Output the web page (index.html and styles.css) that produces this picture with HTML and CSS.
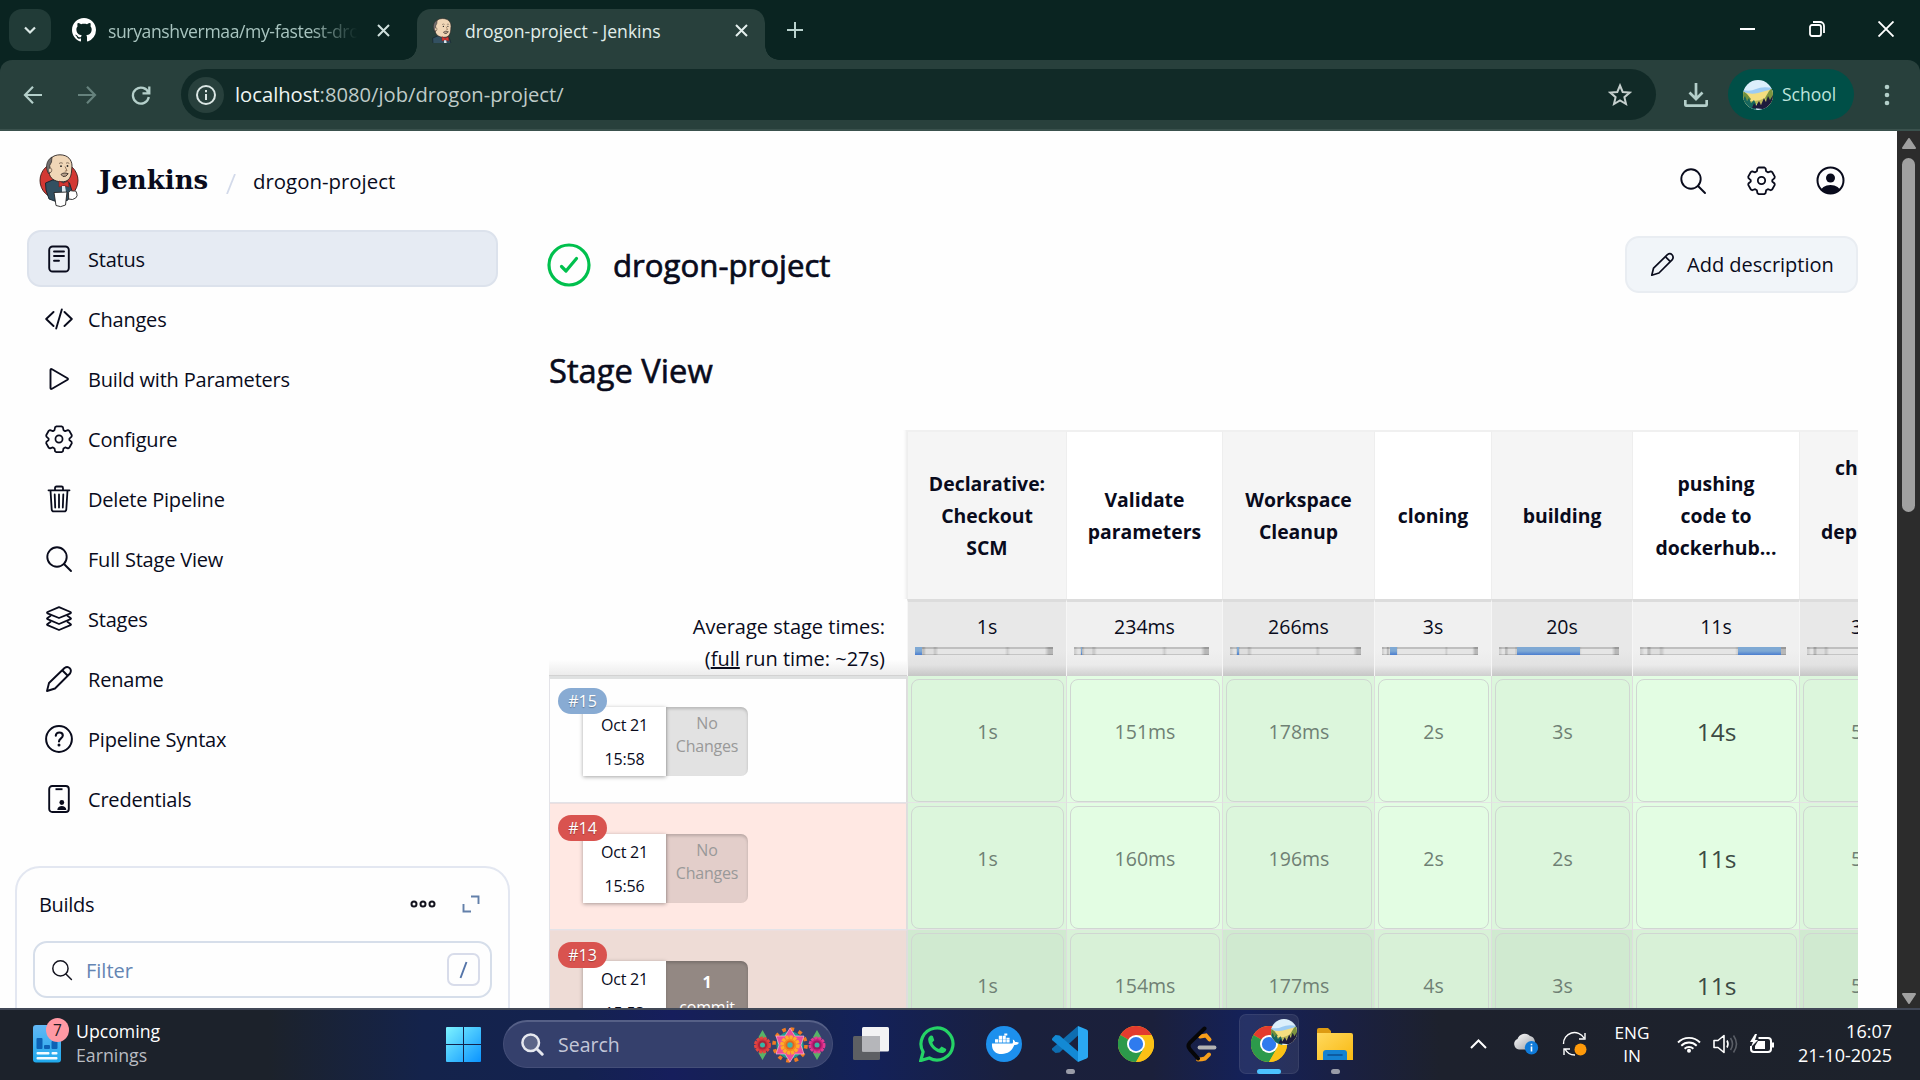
FILE: index.html
```html
<!DOCTYPE html>
<html lang="en">
<head>
<meta charset="utf-8">
<title>drogon-project - Jenkins</title>
<link rel="stylesheet" href="styles.css">
</head>
<body>
<svg class="defs" width="0" height="0" aria-hidden="true">
  <defs>
    <linearGradient id="winGrad" x1="0" y1="0" x2="1" y2="1"><stop offset="0" stop-color="#7df3ff"/><stop offset="1" stop-color="#0a93ff"/></linearGradient>
    <linearGradient id="folderGrad" x1="0" y1="0" x2="1" y2="1"><stop offset="0" stop-color="#ffd95e"/><stop offset="1" stop-color="#f9b911"/></linearGradient>
    <linearGradient id="widgetGrad" x1="0" y1="0" x2="0" y2="1"><stop offset="0" stop-color="#62b8f5"/><stop offset="1" stop-color="#1fa9ec"/></linearGradient>
    <linearGradient id="cloudGrad" x1="0" y1="0" x2="1" y2="1"><stop offset="0" stop-color="#ffffff"/><stop offset="1" stop-color="#9a9da3"/></linearGradient>
  </defs>
  <symbol id="search" viewBox="0 0 28 28"><g fill="none" stroke="currentColor" stroke-width="1.9" stroke-linecap="round"><circle cx="12" cy="12" r="9.7"/><path d="M19 19l7 7"/></g></symbol>
  <symbol id="gear" viewBox="0 0 512 512"><g fill="none" stroke="currentColor" stroke-width="32" stroke-linecap="round" stroke-linejoin="round"><circle cx="256" cy="256" r="65"/><path d="M206 26h100l22 16 10 52 30 18 52-18 24 12 46 82-4 26-40 36v24l40 34 4 26-46 82-24 12-52-18-30 18-10 52-22 16H206l-22-16-10-52-30-18-52 18-24-12-46-82 4-26 40-34v-24l-40-36-4-26 46-82 24-12 52 18 30-18 10-52z"/></g></symbol>
  <symbol id="pencil" viewBox="0 0 28 28"><g fill="none" stroke="currentColor" stroke-width="1.9" stroke-linejoin="round"><path d="M2 26l2-8L19.500 3c4-3 8 1.500 5.500 5.500L10 23.500z"/><path d="M17.500 5.500l5 5"/></g></symbol>
  <g id="butler-man">
    <path d="M6.500 29l7-3 12 0 5 3 2.500 8-4 9-8 3-11-4-3-9z" fill="#335061" stroke="#15202a" stroke-width=".9"/>
    <path d="M9 14C8.500 5 14 .8 21 .8c8 0 12 5.200 12 11.200l-.4 5c-.5 6-2.600 10.200-8.100 10.700-7 .6-12.500-2.200-14-7.200z" fill="#f0d6b7" stroke="#2a2422" stroke-width=".9"/>
    <path d="M9.500 19.500C5.800 13.500 7.500 6 13 3l-.5 5-1.800 3.500.8 7z" fill="#73706f" stroke="#2a2422" stroke-width=".7"/>
    <path d="M10 14.500c2-1.200 3 .5 2.700 2.200-.3 2-2 2.300-2.700 1" fill="#f0d6b7" stroke="#4a3a30" stroke-width=".7"/>
    <path d="M20 9.500q2-1.500 3.800-.2M27 9.200q1.800-1 3.300.2" fill="none" stroke="#6d5a4b" stroke-width=".8"/>
    <circle cx="22" cy="12.200" r=".9" fill="#222"/><circle cx="28.500" cy="12" r=".9" fill="#222"/>
    <path d="M26 12.500l2 4.200-2.200.5" fill="none" stroke="#7a5b43" stroke-width=".8"/>
    <path d="M22 20.500q2.500-2.500 7.200-.8-2 3.500-5.200 2.800z" fill="#b7a08b" stroke="#3a2e28" stroke-width=".9"/>
    <path d="M20 27l4.500 2.300 4.500-2.300 1 6-5.500-1.500-4.500 1.500z" fill="#d33833" stroke="#811d1a" stroke-width=".6"/>
    <path d="M23 32l3 0 1 6-4 0z" fill="#dfe8ee"/>
  </g>
  <symbol id="butler" viewBox="0 0 40 54">
    <ellipse cx="20" cy="26.500" rx="19" ry="18.500" fill="#d33833" stroke="#3b1512" stroke-width=".9"/>
    <use href="#butler-man"/>
    <path d="M29.500 38.500q2-3 4.500-1.500 3.500-1 3.700 2 1.300 3-1 5-3 2.500-7 1z" fill="#fff" stroke="#222" stroke-width=".9"/>
    <path d="M15 38.500l13-.5-1.500 13q-5 3-9.500.5z" fill="#fff" stroke="#222" stroke-width=".9"/>
  </symbol>
  <symbol id="butler-bust" viewBox="5 0 30 36"><use href="#butler-man"/></symbol>
  <symbol id="chrome" viewBox="0 0 48 48">
    <circle cx="24" cy="24" r="24" fill="#fbc116"/>
    <path d="M24 24L3.200 12A24 24 0 0 1 44.800 12z" fill="#e33b2e"/>
    <path d="M24 24L3.200 12A24 24 0 0 0 24 48L34.400 30z" fill="#2c9a4b"/>
    <path d="M24 12h20.800A24 24 0 0 1 24 48l10.400-18z" fill="#fbc116"/>
    <circle cx="24" cy="24" r="12" fill="#fff"/><circle cx="24" cy="24" r="9.500" fill="#2f7bee"/>
  </symbol>
  <symbol id="landscape" viewBox="0 0 30 30">
    <clipPath id="disc"><circle cx="15" cy="15" r="15"/></clipPath>
    <g clip-path="url(#disc)"><rect width="30" height="30" fill="#dceffb"/><path d="M0 10q7 2 13-1t17-1v10H0z" fill="#9ccbf3"/><path d="M0 12q8 3 15 1t15-4v18H0z" fill="#f4dd80"/><path d="M0 11l4 3 4 5-2 3H0z" fill="#6f8f3c"/><path d="M30 7l-4 4-4 7 2 5h6z" fill="#7d9440"/><path d="M3 20q10 3 19-2l-3 6H6z" fill="#b9b75a"/><path d="M0 19l2-3 2 5 2-3 2 5 3-3 2 4v6H0z" fill="#17665d"/><path d="M9 28l2-5 2 3 3-5 2 4 3-7 2 4 2-6 2 4 3-5v15z" fill="#1c1b3c"/></g>
  </symbol>
</svg>

<header class="tabstrip">
  <div class="tab-menu"><svg width="14" height="14" viewBox="0 0 14 14"><path d="M2 4.500l5 5 5-5" fill="none" stroke="#dbe9e6" stroke-width="2.200"/></svg></div>
  <div class="tab tab-idle">
    <svg class="favicon" width="24" height="24" viewBox="0 0 16 16"><path fill="#fff" d="M8 0C3.580 0 0 3.580 0 8c0 3.540 2.290 6.530 5.470 7.590.4.070.55-.17.55-.38 0-.19-.01-.82-.01-1.490-2.010.37-2.530-.49-2.690-.94-.09-.23-.48-.94-.82-1.130-.28-.15-.68-.52-.01-.53.63-.01 1.080.58 1.230.82.72 1.210 1.870.87 2.330.66.07-.52.28-.87.51-1.070-1.780-.2-3.640-.89-3.640-3.950 0-.87.31-1.590.82-2.150-.08-.2-.36-1.020.08-2.120 0 0 .67-.21 2.200.82.64-.18 1.320-.27 2-.27s1.360.09 2 .27c1.530-1.040 2.200-.82 2.200-.82.44 1.100.16 1.920.08 2.120.51.56.82 1.270.82 2.150 0 3.070-1.870 3.750-3.650 3.950.29.25.54.73.54 1.480 0 1.070-.01 1.930-.01 2.200 0 .21.15.46.55.38A8.010 8.010 0 0 0 16 8c0-4.420-3.580-8-8-8z"/></svg>
    <span class="tab-title tab-title-fade">suryanshvermaa/my-fastest-drogon</span>
    <svg class="tab-close" width="13" height="13" viewBox="0 0 13 13"><path d="M1 1l11 11M12 1L1 12" stroke="#cfe0dd" stroke-width="2"/></svg>
  </div>
  <div class="tab tab-active">
    <svg class="favicon" width="22" height="25"><use href="#butler-bust"/></svg>
    <span class="tab-title">drogon-project - Jenkins</span>
    <svg class="tab-close" width="13" height="13" viewBox="0 0 13 13"><path d="M1 1l11 11M12 1L1 12" stroke="#e4efed" stroke-width="2"/></svg>
  </div>
  <svg class="new-tab" width="16" height="16" viewBox="0 0 16 16"><path d="M8 0v16M0 8h16" stroke="#b9d2cd" stroke-width="2"/></svg>
  <div class="window-controls">
    <svg width="16" height="16" viewBox="0 0 16 16"><path d="M0 8h15" stroke="#fff" stroke-width="2"/></svg>
    <svg width="16" height="16" viewBox="0 0 16 16"><g fill="none" stroke="#fff" stroke-width="1.800"><rect x="1" y="4" width="11" height="11" rx="2"/><path d="M4 1h7a4 4 0 0 1 4 4v7"/></g></svg>
    <svg width="16" height="16" viewBox="0 0 16 16"><path d="M.5.500l15 15M15.500.500l-15 15" stroke="#fff" stroke-width="1.900"/></svg>
  </div>
</header>

<div class="toolbar-wrap">
<nav class="toolbar">
  <div class="nav-buttons">
    <svg width="20" height="20" viewBox="0 0 20 20"><path d="M19 10H2.500M10 1.800L2 10l8 8.200" fill="none" stroke="#b4cfca" stroke-width="2.200"/></svg>
    <svg width="20" height="20" viewBox="0 0 20 20"><path d="M1 10h16.500M10 1.800L18 10l-8 8.200" fill="none" stroke="#66827d" stroke-width="2.200"/></svg>
    <svg width="20" height="20" viewBox="0 0 20 20"><path d="M17.500 8A8 8 0 1 0 17.800 12M18.300 1.500v6.800h-6.800" fill="none" stroke="#b4cfca" stroke-width="2.300"/></svg>
  </div>
  <div class="omnibox">
    <span class="site-info"><svg width="22" height="22" viewBox="0 0 22 22"><g fill="none" stroke="#dbe6e4" stroke-width="2"><circle cx="11" cy="11" r="9"/><path d="M11 10v6M11 6v2.200"/></g></svg></span>
    <span class="url"><b>localhost</b>:8080/job/drogon-project/</span>
    <svg class="star" width="24" height="24" viewBox="0 0 24 24"><path d="M12 2.500l2.700 6.500 7 .6-5.300 4.600 1.600 6.800-6-3.600-6 3.600 1.600-6.800L2.300 9.600l7-.6z" fill="none" stroke="#c5cfcd" stroke-width="2"/></svg>
  </div>
  <svg class="download" width="24" height="24" viewBox="0 0 24 24"><path d="M12 0v15M5.500 9.500l6.500 6.500 6.500-6.500M1.300 17v4.200q0 1.500 1.500 1.500h18.400q1.500 0 1.500-1.500V17" fill="none" stroke="#b4cfca" stroke-width="2.700"/></svg>
  <div class="profile"><svg width="30" height="30"><use href="#landscape"/></svg><span>School</span></div>
  <svg class="kebab" width="6" height="22" viewBox="0 0 6 22"><g fill="#b4cfca"><circle cx="3" cy="3" r="2.300"/><circle cx="3" cy="11" r="2.300"/><circle cx="3" cy="19" r="2.300"/></g></svg>
</nav>
</div>

<div class="viewport">
  <div class="page">
    <div class="page-header">
      <svg class="logo" width="40" height="54"><use href="#butler"/></svg>
      <span class="brand">Jenkins</span>
      <svg class="crumb-sep" width="10" height="20" viewBox="0 0 10 20"><path d="M9 0L1 20" stroke="#d3daea" stroke-width="1.800"/></svg>
      <span class="crumb">drogon-project</span>
      <div class="header-actions">
        <svg width="28" height="28"><use href="#search"/></svg>
        <svg width="29" height="29"><use href="#gear"/></svg>
        <svg width="29" height="29" viewBox="0 0 29 29"><clipPath id="userClip"><circle cx="14.500" cy="14.500" r="13"/></clipPath><circle cx="14.500" cy="14.500" r="13" fill="none" stroke="currentColor" stroke-width="2"/><circle cx="14.500" cy="12" r="4.500" fill="currentColor"/><ellipse cx="14.500" cy="26" rx="10" ry="7" fill="currentColor" clip-path="url(#userClip)"/></svg>
      </div>
    </div>
    <div class="columns">
      <aside class="sidebar">
        <ul class="tasks">
          <li class="task active"><svg width="28" height="28" viewBox="0 0 28 28"><g fill="none" stroke="currentColor" stroke-width="1.900" stroke-linecap="round"><rect x="4.200" y="1.500" width="19.600" height="25" rx="3.500"/><path d="M9 6.500h10M9 11h10M9 15.800h5"/></g></svg><span>Status</span></li>
          <li class="task"><svg width="28" height="28" viewBox="0 0 28 28"><path d="M8.500 7L1.200 14l7.300 7M19.500 7l7.300 7-7.300 7M16.800 4.500l-5.600 19" fill="none" stroke="currentColor" stroke-width="1.900" stroke-linecap="round" stroke-linejoin="round"/></svg><span>Changes</span></li>
          <li class="task"><svg width="28" height="28" viewBox="0 0 28 28"><path d="M5.500 5v18q0 1.500 1.500.700l15.500-9q1-.7 0-1.400L7 4.300q-1.500-.8-1.500.7z" fill="none" stroke="currentColor" stroke-width="1.900" stroke-linejoin="round"/></svg><span>Build with Parameters</span></li>
          <li class="task"><svg width="28" height="28"><use href="#gear"/></svg><span>Configure</span></li>
          <li class="task"><svg width="28" height="28" viewBox="0 0 28 28"><g fill="none" stroke="currentColor" stroke-width="1.800" stroke-linecap="round" stroke-linejoin="round"><path d="M3.500 5.300h21M5.500 5.500l1.200 18.800q.2 2 2 2h10.600q1.800 0 2-2L22.500 5.500M10 5V3q0-1.500 1.500-1.500h5Q18 1.500 18 3v2M9.700 9.500l.5 13M14 9.500v13M18.300 9.500l-.5 13"/></g></svg><span>Delete Pipeline</span></li>
          <li class="task"><svg width="28" height="28"><use href="#search"/></svg><span>Full Stage View</span></li>
          <li class="task"><svg width="28" height="28" viewBox="0 0 28 28"><g fill="none" stroke="currentColor" stroke-width="1.800" stroke-linejoin="round"><path d="M14 2.200L25.500 7q1 .7 0 1.300L14 13 2.500 8.300q-1-.6 0-1.300z"/><path d="M6 10.500L2.500 13q-1 .6 0 1.200L14 19l11.500-4.800q1-.6 0-1.200L22 10.500"/><path d="M6 16.500L2.500 19q-1 .6 0 1.200L14 25l11.500-4.800q1-.6 0-1.200L22 16.500"/></g></svg><span>Stages</span></li>
          <li class="task"><svg width="28" height="28"><use href="#pencil"/></svg><span>Rename</span></li>
          <li class="task"><svg width="28" height="28" viewBox="0 0 28 28"><circle cx="14" cy="14" r="12.900" fill="none" stroke="currentColor" stroke-width="2"/><path d="M10.800 10.800c0-4.500 7-4.300 7-.2 0 2.800-3.800 2.800-3.800 5.900" fill="none" stroke="currentColor" stroke-width="2.100" stroke-linecap="round"/><circle cx="14" cy="20" r="1.500" fill="currentColor"/></svg><span>Pipeline Syntax</span></li>
          <li class="task"><svg width="28" height="28" viewBox="0 0 28 28"><rect x="4.200" y="1" width="19.600" height="26" rx="3" fill="none" stroke="currentColor" stroke-width="1.900"/><path d="M10.500 4.200h7" stroke="currentColor" stroke-width="1.900"/><circle cx="16.800" cy="17.500" r="2.400" fill="currentColor"/><path d="M12.300 25c0-5.500 9-5.500 9 0z" fill="currentColor"/></svg><span>Credentials</span></li>
        </ul>
        <section class="builds">
          <div class="builds-head">
            <h2>Builds</h2>
            <svg width="26" height="10" viewBox="0 0 26 10"><g fill="none" stroke="#14141f" stroke-width="2"><circle cx="4" cy="5" r="2.500"/><circle cx="13" cy="5" r="2.500"/><circle cx="22" cy="5" r="2.500"/></g></svg>
            <svg class="expand" width="18" height="18" viewBox="0 0 18 18"><path d="M9 1.500h7.500V9M1.500 9v7.500H9" fill="none" stroke="#6380aa" stroke-width="1.900"/></svg>
          </div>
          <div class="filter">
            <svg width="22" height="22"><use href="#search"/></svg>
            <span>Filter</span>
            <kbd><svg width="9" height="18" viewBox="0 0 9 18"><path d="M7.500 1l-6 16" stroke="#5474a8" stroke-width="1.900"/></svg></kbd>
          </div>
        </section>
      </aside>

      <main class="main">
        <div class="title-row">
          <svg width="44" height="44" viewBox="0 0 44 44"><g fill="none" stroke="#00c04d" stroke-width="3.200" stroke-linecap="round" stroke-linejoin="round"><circle cx="22" cy="22" r="20"/><path d="M14.500 23.500l4.500 4.500 10.500-12.500"/></g></svg>
          <h1>drogon-project</h1>
          <button class="describe"><svg width="25" height="25"><use href="#pencil"/></svg><span>Add description</span></button>
        </div>
        <h2 class="section-title">Stage View</h2>

        <div class="stages">
          <div class="row head">
            <div class="corner"></div>
            <div class="th">Declarative:<br>Checkout<br>SCM</div>
            <div class="th">Validate<br>parameters</div>
            <div class="th">Workspace<br>Cleanup</div>
            <div class="th">cloning</div>
            <div class="th">building</div>
            <div class="th">pushing<br>code to<br>dockerhub...</div>
            <div class="th cut"><span class="cut-a">ch</span><span class="cut-b">dep</span></div>
          </div>
          <div class="row averages">
            <div class="avg-label">Average stage times:<br>(<u>full</u> run time: ~27s)</div>
            <div class="avg"><span>1s</span><div class="bar"><i style="left:0;width:5.200%"></i></div></div>
            <div class="avg"><span>234ms</span><div class="bar"><i style="left:5.200%;width:.8%"></i></div></div>
            <div class="avg"><span>266ms</span><div class="bar"><i style="left:5.400%;width:1.500%"></i></div></div>
            <div class="avg"><span>3s</span><div class="bar"><i style="left:8.500%;width:7.300%"></i></div></div>
            <div class="avg"><span>20s</span><div class="bar"><i style="left:15.200%;width:52%"></i></div></div>
            <div class="avg"><span>11s</span><div class="bar"><i style="left:67.400%;width:29.200%"></i></div></div>
            <div class="avg cut"><span>3</span><div class="bar"></div></div>
          </div>

          <div class="row run">
            <div class="run-info">
              <span class="badge blue">#15</span>
              <div class="when"><span>Oct 21</span><span>15:58</span></div>
              <div class="changes">No<br>Changes</div>
            </div>
            <div class="cell"><div>1s</div></div><div class="cell"><div>151ms</div></div><div class="cell"><div>178ms</div></div><div class="cell"><div>2s</div></div><div class="cell"><div>3s</div></div><div class="cell"><div class="slow">14s</div></div><div class="cell cut"><div>5</div></div>
          </div>
          <div class="row run failed">
            <div class="run-info">
              <span class="badge">#14</span>
              <div class="when"><span>Oct 21</span><span>15:56</span></div>
              <div class="changes">No<br>Changes</div>
            </div>
            <div class="cell"><div>1s</div></div><div class="cell"><div>160ms</div></div><div class="cell"><div>196ms</div></div><div class="cell"><div>2s</div></div><div class="cell"><div>2s</div></div><div class="cell"><div class="slow">11s</div></div><div class="cell cut"><div>5</div></div>
          </div>
          <div class="row run failed hovered">
            <div class="run-info">
              <span class="badge">#13</span>
              <div class="when"><span>Oct 21</span><span>15:53</span></div>
              <div class="changes commits"><b>1</b><br>commit</div>
            </div>
            <div class="cell"><div>1s</div></div><div class="cell"><div>154ms</div></div><div class="cell"><div>177ms</div></div><div class="cell"><div>4s</div></div><div class="cell"><div>3s</div></div><div class="cell"><div class="slow">11s</div></div><div class="cell cut"><div>5</div></div>
          </div>
        </div>
      </main>
    </div>
  </div>
  <div class="scrollbar">
    <svg width="14" height="11" viewBox="0 0 14 11"><path d="M7 1L13 10H1z" fill="#a0a0a0" stroke="#a0a0a0" stroke-width="2" stroke-linejoin="round"/></svg>
    <div class="thumb"></div>
    <svg class="down" width="14" height="11" viewBox="0 0 14 11"><path d="M7 10L13 1H1z" fill="#a0a0a0" stroke="#a0a0a0" stroke-width="2" stroke-linejoin="round"/></svg>
  </div>
</div>

<footer class="taskbar">
  <div class="widget">
    <div class="widget-icon">
      <svg width="28" height="38" viewBox="0 0 28 38"><rect width="28" height="37.500" rx="3" fill="url(#widgetGrad)"/><g fill="#0d62b5"><rect x="3.500" y="13" width="6" height="11" rx="1"/><rect x="11" y="20" width="6" height="4" rx="1"/><rect x="18.500" y="16" width="6" height="8" rx="1"/></g><g fill="#f2fbff"><rect x="3.500" y="27" width="13" height="2.600" rx="1"/><rect x="18.500" y="27" width="6" height="2.600" rx="1"/><rect x="3.500" y="32" width="21" height="2.600" rx="1"/></g></svg>
      <span class="count">7</span>
    </div>
    <div class="widget-text"><span>Upcoming</span><span class="dim">Earnings</span></div>
  </div>
  <svg class="start" width="35" height="35" viewBox="0 0 35 35"><path d="M0 1q0-1 1-1h16v17H0zM18 0h16q1 0 1 1v16H18zM0 18h17v17H1q-1 0-1-1zM18 18h17v16q0 1-1 1H18z" fill="url(#winGrad)"/></svg>
  <div class="search-pill">
    <svg width="23" height="23" viewBox="0 0 23 23"><circle cx="9.700" cy="9.700" r="8.300" fill="#5c6588" stroke="#e6e8ef" stroke-width="2.500"/><path d="M15.700 15.700l5.500 5.500" stroke="#e6e8ef" stroke-width="3" stroke-linecap="round"/></svg>
    <span>Search</span>
    <svg class="flowers" width="72" height="36" viewBox="0 0 72 36">
      <g fill="#58b368"><path d="M8.500 3l4 7-4 7-4-7zM8.500 33l4-7-4-7-4 7zM63 3l4 7-4 7-4-7zM63 33l4-7-4-7-4 7z"/></g>
      <circle cx="8.500" cy="18" r="7.200" fill="#d2353f" stroke="#e2453f" stroke-width="2.600" stroke-dasharray="3 .9"/><circle cx="8.500" cy="18" r="4.500" fill="#a82436"/><circle cx="8.500" cy="18" r="2.500" fill="#37b5a5"/>
      <circle cx="63" cy="18" r="7.200" fill="#c91f7b" stroke="#e23a92" stroke-width="2.600" stroke-dasharray="3 .9"/><circle cx="63" cy="18" r="4.500" fill="#961a62"/><circle cx="63" cy="18" r="2.500" fill="#37b5a5"/>
      <circle cx="36" cy="18" r="16" fill="none" stroke="#f07a22" stroke-width="3.600" stroke-dasharray="3.700 4.680"/>
      <circle cx="36" cy="18" r="13.500" fill="#1d9c8e"/>
      <path d="M36 1l5 8 9-0-3 9 3 9-9 0-5 8-5-8-9 0 3-9-3-9 9 0z" fill="#ec4b9b" stroke="#ffd2e2" stroke-width=".6"/>
      <circle cx="36" cy="18" r="8" fill="#f58a1f" stroke="#ffab2c" stroke-width="3.600" stroke-dasharray="3.200 .9"/><circle cx="36" cy="18" r="4.500" fill="#e2641f"/><circle cx="36" cy="18" r="2.700" fill="#3cb7a8"/>
    </svg>
  </div>
  <div class="apps">
    <div class="app"><svg width="36" height="36" viewBox="0 0 36 36"><rect y="10" width="27" height="24" rx="1.500" fill="#5d5f63"/><rect x="9" y="1" width="27" height="24.500" rx="1.500" fill="#f3f3f4"/><path d="M9 10h18v15.500H9z" fill="#b5b6ba"/></svg></div>
    <div class="app"><svg width="36" height="36" viewBox="0 0 36 36"><path d="M1.800 34.500l2.300-8.600A16 16 0 1 1 10.300 32z" fill="none" stroke="#25d366" stroke-width="3.200"/><path d="M12.500 9.500c-1.500 0-3.500 2-3.300 4.500.5 6.500 8 13 13.800 13 2.500 0 4.500-1.700 4.200-4l-4.600-2.500-2.600 2.500c-3-1-5.700-3.500-6.700-6.500l2-2.300-1.500-4.200z" fill="#25d366"/></svg></div>
    <div class="app"><svg width="36" height="36" viewBox="0 0 36 36"><circle cx="18" cy="18" r="18" fill="#1d90ed"/><path d="M6 17.500h20.500c.8-1.300.5-3 .3-4 1.600.6 2.200 1.700 2.400 2.600 1.400-.3 2.600 0 3.800.7-1 1.800-2.700 2.400-4.700 2.300C26 25 21.500 28 16 28 9 28 5.500 24 6 17.500z" fill="#fff"/><g fill="#fff"><path d="M9 13.300h3.200v3.200H9zM12.800 13.300H16v3.200h-3.200zM16.600 13.300h3.200v3.200h-3.200zM20.400 13.300h3.200v3.200h-3.200zM12.800 9.800H16V13h-3.200zM16.600 9.800h3.200V13h-3.200zM20.400 11.800h3.200v1.200h-3.200zM18.300 7.500h3v2h-3z"/></g></svg></div>
    <div class="app"><svg width="36" height="36" viewBox="0 0 36 36"><path d="M26 0v9.500L7.500 26.500 3.500 27 0 24v-1.500z" fill="#0e6db0"/><path d="M0 12.500l3.500-3.500 4 .5L26 25.500V36L0 14z" fill="#1389d4"/><path d="M26 0l8.500 3.500q1.500.7 1.500 2v25q0 1.300-1.500 2L26 36z" fill="#2aa8f2"/></svg><i class="dot"></i></div>
    <div class="app"><svg width="36" height="36"><use href="#chrome"/></svg></div>
    <div class="app"><svg width="32" height="36" viewBox="0 0 32 36"><path d="M14 10.500l6-1 3.500 4M23 28.500l-4 4q-3 1-7 1" fill="none" stroke="#f89f1b" stroke-width="4" stroke-linecap="round"/><path d="M18.500 2.500L4 16.500q-3 3.500 0 7l8 9" fill="none" stroke="#060608" stroke-width="4" stroke-linecap="round"/><path d="M13.500 21.500h15" stroke="#b3b3b3" stroke-width="3.800" stroke-linecap="round"/></svg></div>
    <div class="app current"><svg width="36" height="36"><use href="#chrome"/></svg><svg class="app-badge" width="26" height="26" viewBox="0 0 30 30"><use href="#landscape"/></svg><i class="dot"></i></div>
    <div class="app"><svg width="36" height="36" viewBox="0 0 36 36"><path d="M0 4q0-2 2-2h9l3 3v6H0z" fill="#dd9b12"/><path d="M0 7h34q2 0 2 2v25H0z" fill="url(#folderGrad)"/><path d="M6 34v-7q0-3 3-3h18q3 0 3 3v7z" fill="#1482d2"/><path d="M11 29h14" stroke="#0b4f91" stroke-width="1.600" stroke-linecap="round"/></svg><i class="dot"></i></div>
  </div>
  <div class="tray">
    <svg class="chev" width="17" height="10" viewBox="0 0 17 10"><path d="M1 9l7.500-7.500L16 9" fill="none" stroke="#fff" stroke-width="2"/></svg>
    <svg class="cloud" width="25" height="22" viewBox="0 0 25 22"><path d="M5 16.500A5.500 5.500 0 0 1 3.500 6 7.500 7.500 0 0 1 16 3c4 1 5 4 5 7l-4 6.500z" fill="url(#cloudGrad)"/><circle cx="17.500" cy="14.800" r="6.700" fill="#0f7ad8"/><path d="M17.500 13.500v5M17.500 10.800v1.500" stroke="#fff" stroke-width="1.600"/></svg>
    <svg class="sync" width="25" height="26" viewBox="0 0 25 26"><path d="M1.500 13a11 11 0 0 1 20.500-6M23 2v6h-6M13 24a11 11 0 0 1-10-6M2 24v-6h6" fill="none" stroke="#fff" stroke-width="1.400"/><circle cx="18.500" cy="18.500" r="6" fill="#ff9a0a"/></svg>
    <div class="lang"><span>ENG</span><span>IN</span></div>
    <div class="status">
      <svg width="24" height="18" viewBox="0 0 24 18"><g fill="none" stroke="#fff" stroke-width="1.900"><path d="M1 7.500a15.500 15.500 0 0 1 22 0M4.300 10.700a11 11 0 0 1 15.400 0M7.600 13.700a6.500 6.500 0 0 1 8.800 0" /></g><circle cx="12" cy="15.800" r="2" fill="#fff"/></svg>
      <svg width="25" height="20" viewBox="0 0 25 20"><path d="M1 6.500h4l6-5v17l-6-5H1z" fill="none" stroke="#fff" stroke-width="1.600" stroke-linejoin="round"/><path d="M14 6.500q2 3.500 0 7" fill="none" stroke="#fff" stroke-width="1.600"/><path d="M17.500 4q4 6 0 12M20.500 1.500q6 8.500 0 17" fill="none" stroke="#5a5e66" stroke-width="1.600"/></svg>
      <svg width="24" height="20" viewBox="0 0 24 20"><path d="M8.500 4H18q3 0 3 3v8q0 3-3 3H4q-3 0-3-3v-3" fill="none" stroke="#fff" stroke-width="2"/><path d="M8 7h7v8H5v-3z" fill="#fff"/><path d="M22 8.500h2v5h-2z" fill="#fff"/><path d="M5 0L0 8h3l-2 5 7-7H5l2-6z" fill="#fff"/></svg>
    </div>
    <div class="clock"><span>16:07</span><span>21-10-2025</span></div>
  </div>
</footer>
</body>
</html>
```
FILE: styles.css
```css
* { box-sizing: border-box; }
body {
  margin: 0;
  width: 1920px;
  height: 1080px;
  overflow: hidden;
  display: flex;
  flex-direction: column;
  font-family: "Open Sans", "Noto Sans", sans-serif;
  font-size: 20px;
  color: #090b1c;
  background: #fff;
}
svg { display: block; flex: none; }
.defs { position: absolute; }
h1, h2 { margin: 0; font-weight: 400; }
ul { margin: 0; padding: 0; list-style: none; }

/* Tab strip */
.tabstrip {
  flex: none;
  height: 60px;
  background: #0a2421;
  display: flex;
  padding: 9px 26px 0 9px;
  font-size: 17.600px;
}
.tab-menu {
  width: 42px;
  height: 42px;
  border-radius: 13px;
  background: #213b37;
  display: grid;
  place-items: center;
}
.tab { display: flex; align-items: center; height: 51px; padding-bottom: 9px; }
.tab-idle { width: 366px; padding-left: 21px; color: #a8c4bf; }
.tab-idle .tab-title { width: 252px; margin-left: 12px; letter-spacing: -.4px; }
.tab-idle .tab-close { margin-left: 17px; }
.tab-title { white-space: nowrap; overflow: hidden; padding-top: 1px; }
.tab-title-fade { -webkit-mask-image: linear-gradient(90deg, #000 80%, transparent 99%); mask-image: linear-gradient(90deg, #000 80%, transparent 99%); }
.tab-active {
  position: relative;
  width: 348px;
  padding-left: 14px;
  padding-right: 17px;
  background: #28403c;
  border-radius: 14px 14px 0 0;
  color: #e1eeeb;
}
.tab-active::before, .tab-active::after {
  content: "";
  position: absolute;
  bottom: 0;
  width: 14px;
  height: 14px;
}
.tab-active::before { left: -14px; background: radial-gradient(circle at 0 0, transparent 13.500px, #28403c 14px); }
.tab-active::after { right: -14px; background: radial-gradient(circle at 100% 0, transparent 13.500px, #28403c 14px); }
.tab-active .tab-title { margin-left: 12px; }
.tab-active .tab-close { margin-left: auto; }
.new-tab { margin: 13px 0 0 22px; }
.window-controls { margin-left: auto; display: flex; gap: 53px; padding-top: 12px; }

/* Toolbar */
.toolbar-wrap { flex: none; background: #0a2421; }
.toolbar {
  height: 71px;
  background: #28403c;
  border-bottom: 2px solid #3a514d;
  border-radius: 12px 12px 0 0;
  display: flex;
  align-items: center;
  padding: 1px 30px 1px 23px;
}
.nav-buttons { display: flex; gap: 34px; width: 158px; }
.omnibox {
  width: 1475px;
  height: 51px;
  border-radius: 26px;
  background: #112a27;
  display: flex;
  align-items: center;
  padding: 0 24px 0 7px;
}
.site-info { width: 36px; height: 36px; border-radius: 50%; background: #28403c; display: grid; place-items: center; }
.url { margin: -2px 0 0 11px; font-size: 20.200px; color: #bfcbc8; }
.url b { font-weight: 400; color: #eef5f3; }
.star { margin-left: auto; }
.download { margin-left: 28px; }
.profile {
  width: 126px;
  height: 51px;
  margin-left: 20px;
  border-radius: 26px;
  background: #004f47;
  display: flex;
  align-items: center;
  gap: 9px;
  padding-left: 15px;
  font-size: 17.500px;
  color: #bfe5dd;
}
.profile span { margin-top: -2px; }
.kebab { margin-left: auto; }

/* Page */
.viewport { flex: none; height: 877px; display: flex; overflow: hidden; }
.page { width: 1897px; background: #fefefe; }
.scrollbar {
  width: 23px;
  background: #2c2c2c;
  display: flex;
  flex-direction: column;
  align-items: center;
  padding: 7px 0 4px;
}
.thumb { width: 13px; height: 354px; margin-top: 9px; border-radius: 7px; background: #a0a0a0; }
.down { margin-top: auto; }

.page-header { height: 99px; display: flex; align-items: center; padding: 0 52px 0 39px; }
.brand { font: bold 26px "DejaVu Serif", serif; margin: -2px 0 0 20px; width: 110px; }
.crumb-sep { margin: 6px 0 0 17px; }
.crumb { margin-left: 17px; font-size: 20.400px; }
.header-actions { margin-left: auto; display: flex; align-items: center; gap: 40px; }

.columns { display: flex; }
.sidebar { width: 511px; }
.tasks { display: flex; flex-direction: column; gap: 3px; padding-left: 27px; letter-spacing: -.2px; }
.task {
  width: 471px;
  height: 57px;
  border: 2px solid transparent;
  border-radius: 14px;
  display: flex;
  align-items: center;
  gap: 15px;
  padding-left: 16px;
  white-space: nowrap;
}
.task span { padding-top: 2px; }
.task.active { background: #e6ebf3; border-color: #dce2ec; }

.builds {
  margin: 39px 0 0 15px;
  width: 495px;
  height: 260px;
  border: 2px solid #e3e7f1;
  border-radius: 25px;
  padding: 0 16px;
}
.builds-head { height: 73px; display: flex; align-items: center; padding: 0 12px 2px 6px; }
.builds-head h2 { font-size: 20px; letter-spacing: -.3px; flex: 1; padding-top: 2px; }
.expand { margin-left: 26px; }
.filter {
  height: 57px;
  border: 2px solid #d6deea;
  border-radius: 14px;
  display: flex;
  align-items: center;
  padding: 0 10px 0 16px;
  gap: 13px;
  color: #6485b3;
}
.filter > svg { color: #14141f; }
.filter span { flex: 1; padding-top: 2px; }
.filter kbd { width: 33px; height: 33px; border: 2px solid #d8dcea; border-radius: 7px; display: grid; place-items: center; }

.main { width: 1347px; padding-left: 36px; }
.title-row { height: 71px; display: flex; align-items: center; padding-bottom: 1px; }
.title-row h1 { font-size: 31.200px; margin-left: 22px; -webkit-text-stroke: .7px currentColor; }
.describe {
  margin: -1px 0 0 auto;
  width: 233px;
  height: 57px;
  border: 2px solid #e9edf2;
  border-radius: 14px;
  background: #f1f5f9;
  display: flex;
  align-items: center;
  padding: 0 0 0 23px;
  gap: 12px;
  font: inherit;
  color: inherit;
  white-space: nowrap;
}
.section-title { font-size: 32.700px; line-height: 40px; margin: 50px 0 39px 2px; -webkit-text-stroke: .6px currentColor; }

/* Stage table */
.stages { margin-left: 2px; width: 1309px; overflow: hidden; }
.row { display: grid; grid-template-columns: 358px 159px 156px 152px 117px 141px 167px 59px; }
.row > * { min-width: 0; overflow: hidden; }
.head { height: 169px; font-weight: 700; font-size: 19.400px; line-height: 32px; }
.th {
  border-top: 2px solid #f0f0f0;
  border-left: 1px solid #eee;
  background: #fff;
  display: flex;
  align-items: center;
  justify-content: center;
  text-align: center;
  white-space: nowrap;
}
.head .th:nth-child(even) { background: #f5f5f5; }
.corner { box-shadow: inset -4px 0 4px -4px #ddd; }
.th.cut { flex-direction: column; align-items: flex-start; justify-content: flex-start; padding-top: 20px; line-height: 32px; }
.cut-a { margin: 0 0 32px 35px; }
.cut-b { margin-left: 21px; }
.averages { height: 77px; }
.avg-label {
  text-align: right;
  padding: 12px 22px 0 0;
  line-height: 32px;
  border-bottom: 1px solid #d2d2d2;
  background: linear-gradient(#fefefe 80%, #ececec);
}
.avg {
  border-top: 3px solid #dcdcdc;
  border-left: 1px solid #f6f6f6;
  background: linear-gradient(#f0f0f0 65%, #ebebeb 85%, #cfcfcf);
  padding: 9px 13px 0 7px;
  text-align: center;
  font-size: 19.500px;
}
.averages .avg:nth-child(even) { background: linear-gradient(#e8e8e8 65%, #e2e2e2 85%, #c6c6c6); }
.avg span { display: block; line-height: 32px; padding-left: 6px; }
.bar {
  position: relative;
  height: 8px;
  margin-top: 4px;
  border-top: 2px solid rgba(0, 0, 0, .16);
  border-bottom: 1px solid rgba(0, 0, 0, .14);
  background: linear-gradient(90deg, #cfcfcf 0 1%, #e4e4e4 3% 4.500%, #bdbdbd 5.500% 6.500%, #dedede 8% 13%, #cacaca 14% 15%, #e5e5e5 17% 65%, #cdcdcd 67%, #e5e5e5 69% 94%, #b7b7b7 97% 100%);
}
.bar i { position: absolute; top: -2px; height: 8px; background: linear-gradient(#7fa9d4 50%, #4a7dcf); }
.avg.cut span { text-align: left; padding-left: 44px; }
.avg.cut { padding-right: 0; }
.avg.cut .bar { width: 130px; }

.run { height: 127px; }
.run-info {
  position: relative;
  display: flex;
  align-items: flex-start;
  padding: 28px 0 0 33px;
  border: 1px solid #e3e3e8;
  border-top: 3px solid #dfe1e1;
  border-right-color: #ddd;
  background: #fefefe;
  font-size: 16px;
}
.failed .run-info { background: #ffe8e3; border-top: 1px solid #ecdede; padding-top: 30px; }
.hovered .run-info { background: #eedcd6; }
.badge {
  position: absolute;
  left: 8px;
  top: 9px;
  width: 49px;
  height: 26px;
  border-radius: 13px;
  background: #d9534f;
  color: #fff;
  text-align: center;
  line-height: 27px;
  text-shadow: 0 1px 1px rgba(0, 0, 0, .3);
}
.failed .badge { top: 11px; }
.badge.blue { background: #88abd3; }
.when {
  width: 83px;
  height: 69px;
  background: #fff;
  box-shadow: 0 1px 4px rgba(0, 0, 0, .35);
  display: flex;
  flex-direction: column;
  align-items: center;
  font-size: 16px;
  letter-spacing: -.2px;
}
.when span { line-height: 34px; }
.when span:first-child { padding-top: 1px; }
.changes {
  width: 82px;
  height: 69px;
  border-radius: 0 7px 7px 0;
  background: rgba(0, 0, 0, .11);
  box-shadow: inset 0 2px 3px rgba(0, 0, 0, .18);
  color: #999;
  text-align: center;
  line-height: 23px;
  padding-top: 5px;
  letter-spacing: -.2px;
}
.commits { background: #938883; color: #fff; padding-top: 9px; line-height: 25px; }
.cell { padding: 3px 2px 0 3px; background: #e3fde3; border-left: 1px solid #dedede; border-bottom: 1px solid #e4e4e4; color: #6f8074; font-size: 19.500px; }
.run .cell:nth-child(even) { background: #dcf6dc; }
.cell div { height: 100%; border: 1px solid #d0d6d2; border-radius: 8px; display: flex; align-items: center; justify-content: center; padding-bottom: 19px; }
.hovered .cell { background: #d8f1d7; }
.hovered .cell:nth-child(even) { background: #d0ead0; }
.cell .slow { font-size: 24.500px; color: #3c4a44; }
.cell.cut div { justify-content: flex-start; padding-left: 47px; width: 130px; }

/* Taskbar */
.taskbar {
  position: relative;
  flex: none;
  height: 72px;
  border-top: 2px solid #414857;
  background: linear-gradient(90deg, #1c222b 0 14%, #14234b 22%, #14224f 30%, #161e5c 35%, #16244c 41%, #13215a 45%, #1a203c 53%, #1b203b 60%, #14215a 65%, #1a2042 70%, #1d212d 75%, #1d222b);
  display: flex;
  align-items: center;
  padding-bottom: 2px;
  color: #fff;
  font-size: 17.700px;
}
.widget { display: flex; width: 446px; padding-left: 33px; gap: 15px; align-items: center; }
.widget-icon { position: relative; }
.count {
  position: absolute;
  left: 13px;
  top: -7px;
  width: 23px;
  height: 24px;
  border-radius: 50%;
  background: #ff99a4;
  color: #1c1c22;
  font-size: 15.500px;
  line-height: 24px;
  text-align: center;
}
.widget-text { display: flex; flex-direction: column; line-height: 24px; margin-top: -2px; }
.dim { color: #b9bcc2; }
.search-pill {
  width: 330px;
  height: 48px;
  margin-left: 22px;
  border-radius: 24px;
  background: #35406c;
  border: 1px solid #444e78;
  border-top: 2px solid #566087;
  display: flex;
  align-items: center;
  padding: 0 6px 0 17px;
  color: #c3c7d8;
  font-size: 19.500px;
}
.search-pill span { margin-left: 14px; }
.flowers { margin-left: auto; }
.apps { display: flex; margin-left: 8px; }
.app { position: relative; width: 60px; height: 60px; margin-right: 6.300px; display: grid; place-items: center; }
.current { background: rgba(255, 255, 255, .08); border: 1px solid rgba(255, 255, 255, .07); border-radius: 7px; }
.dot { position: absolute; bottom: 0; left: 26px; width: 9px; height: 5px; border-radius: 3px; background: #9a9ca8; }
.current .dot { left: 17px; width: 24px; background: #4cc2ff; bottom: -1px; }
.app-badge { position: absolute; left: 31px; top: 4px; }
.tray { margin-left: auto; display: flex; align-items: center; padding-right: 28px; }
.cloud { margin-left: 27px; }
.sync { margin-left: 23px; }
.lang, .clock { display: flex; flex-direction: column; line-height: 23px; }
.lang { align-items: center; width: 50px; margin-left: 20px; font-size: 17.200px; }
.status { display: flex; align-items: center; margin-left: 20px; gap: 12px; }
.clock { align-items: flex-end; line-height: 24px; width: 110px; margin: -2px 0 0 8px; font-size: 18px; }
```
